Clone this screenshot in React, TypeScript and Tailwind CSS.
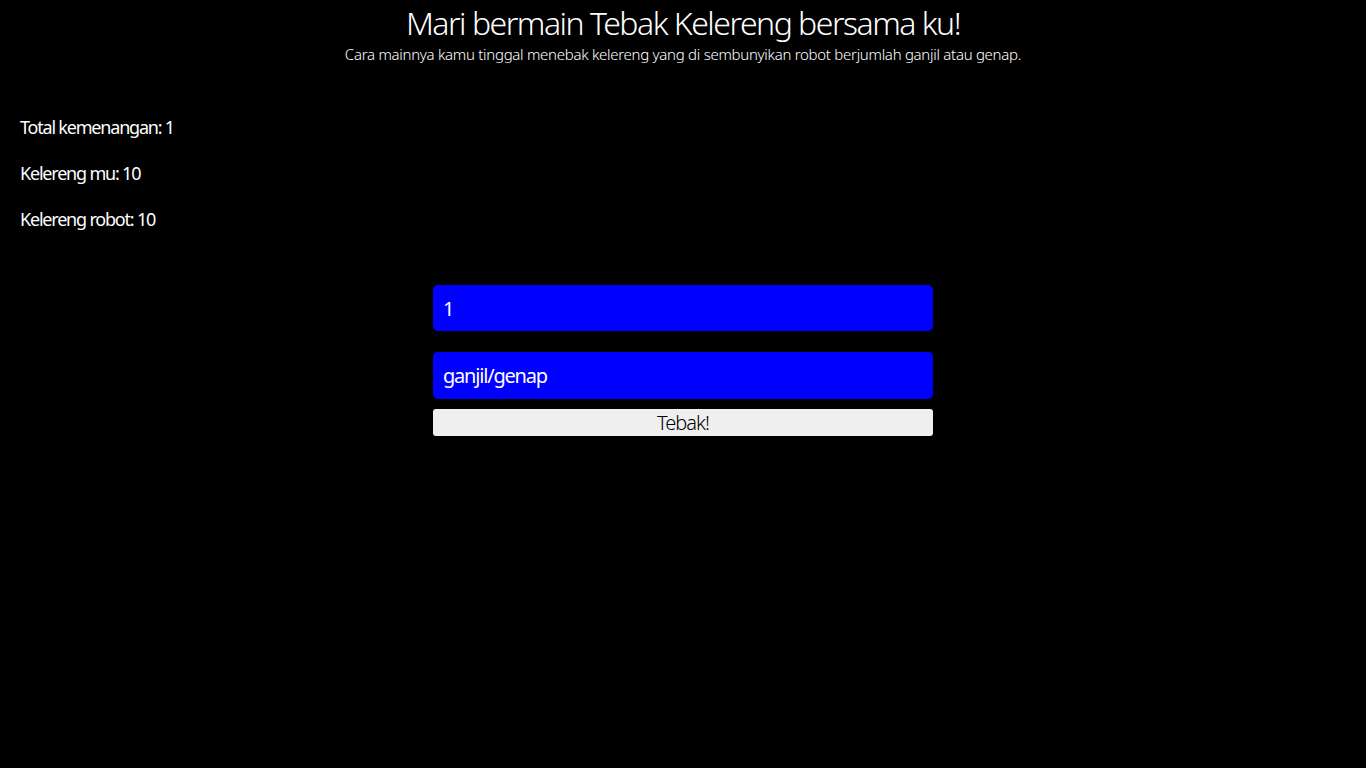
import React from "react";

export default function App() {
  return (
    <div className="min-h-screen w-full bg-black text-white">
      <div className="font-['Noto_Sans',sans-serif]">
        <div className="flex flex-col items-center pt-[2px]">
          <h1 className="text-[32px] leading-[42px] font-light tracking-[-1.5px]">Mari bermain Tebak Kelereng bersama ku!</h1>
          <p className="text-[15px] leading-[20px] font-light tracking-[-0.28px]">Cara mainnya kamu tinggal menebak kelereng yang di sembunyikan robot berjumlah ganjil atau genap.</p>
        </div>
        <div className="mt-[51px] flex flex-col gap-[21px] pl-[20px] text-[18px] leading-[25px] tracking-[-1.2px]">
          <p>Total kemenangan: 1</p>
          <p>Kelereng mu: 10</p>
          <p>Kelereng robot: 10</p>
        </div>
        <div className="mt-[53px] flex flex-col items-center">
          <input
            readOnly
            value="1"
            className="h-[46px] w-[500px] rounded-[5px] bg-[#0000ff] pl-[10px] text-[20px] tracking-[-1.2px] text-white outline-none"
          />
          <input
            readOnly
            value="ganjil/genap"
            className="mt-[21px] h-[47px] w-[500px] rounded-[5px] bg-[#0000ff] pl-[10px] text-[20px] tracking-[-1.2px] text-white outline-none"
          />
          <button className="mt-[10px] h-[27px] w-[500px] rounded-[3px] bg-[#efefef] text-[20px] font-light leading-[27px] tracking-[-1px] text-black">
            Tebak!
          </button>
        </div>
      </div>
    </div>
  );
}
